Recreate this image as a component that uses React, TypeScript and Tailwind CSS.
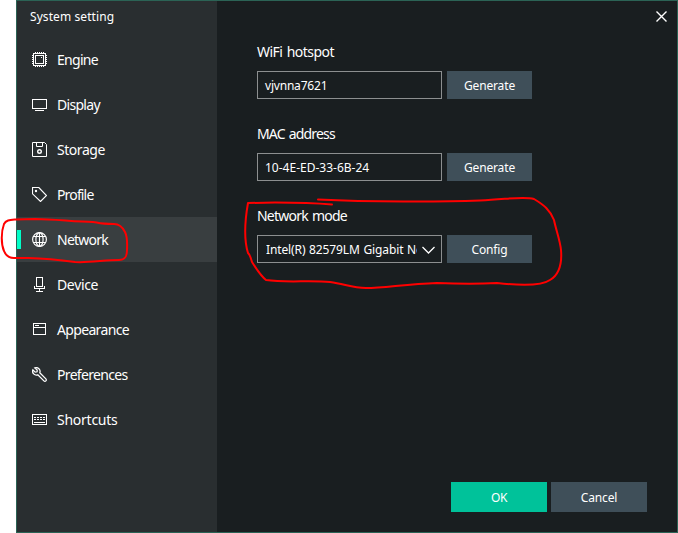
import type { ReactNode } from "react";

const icons: Record<string, ReactNode> = {
  Engine: (
    <g shapeRendering="crispEdges">
      <rect x="1.5" y="1.5" width="12" height="12" />
      <rect x="3.5" y="3.5" width="8" height="8" />
      <path d="M3 .5h9M3 14.5h9M.5 3v9M14.5 3v9" strokeDasharray="1 1" />
      <path d="M9 5.5h1" />
    </g>
  ),
  Display: (
    <g shapeRendering="crispEdges">
      <rect x=".5" y="2.5" width="14" height="9" />
      <path d="M3 13.5h9" />
    </g>
  ),
  Storage: (
    <g>
      <path d="M.5.5h12l2 2v12H.5z" />
      <path d="M4.5.5v4h6v-4" />
      <circle cx="7.5" cy="9.5" r="1.8" strokeWidth="1.4" />
    </g>
  ),
  Profile: (
    <g strokeWidth="1.15">
      <path d="M.5.5h6.3l7.7 8-6 6-8-7.7z" />
      <circle cx="4" cy="4" r=".6" />
    </g>
  ),
  Network: (
    <g strokeWidth="1.15">
      <circle cx="7.5" cy="7.5" r="6.9" />
      <ellipse cx="7.5" cy="7.5" rx="3.6" ry="6.9" />
      <path d="M7.5.5v14M1 4.500h13M1 10.500h13" />
    </g>
  ),
  Device: (
    <g shapeRendering="crispEdges">
      <rect x="4.5" y=".5" width="6" height="9" />
      <path d="M2.5 9v2.5h10V9M7.5 11v3M4 14.5h7" />
    </g>
  ),
  Appearance: (
    <g shapeRendering="crispEdges">
      <rect x="1.5" y="1.5" width="12" height="11" />
      <path d="M2 5.5h11M3 3.5h4" />
    </g>
  ),
  Preferences: (
    <g strokeWidth="1.25">
      <path d="M2.8.9a3.8 3.8 0 0 1 5 4.9l6.1 6.1a1.4 1.4 0 0 1-2 2L5.8 7.8a3.8 3.8 0 0 1-4.9-5l2.3 2.3 1.9-.3.1-1.7z" />
    </g>
  ),
  Shortcuts: (
    <g shapeRendering="crispEdges">
      <rect x=".5" y="2.5" width="14" height="10" />
      <path d="M2 5.5h11M2 7.5h11" strokeDasharray="2 1" />
      <path d="M2 10.5h11" />
    </g>
  ),
};

const menu = [
  { name: "Engine", tracking: "tracking-[-0.7px]" },
  { name: "Display", tracking: "tracking-[-0.7px]" },
  { name: "Storage", tracking: "tracking-[-0.45px]" },
  { name: "Profile", tracking: "tracking-[-0.85px]" },
  { name: "Network", tracking: "tracking-[-0.75px]" },
  { name: "Device", tracking: "tracking-[-0.35px]" },
  { name: "Appearance", tracking: "tracking-[-0.66px]" },
  { name: "Preferences", tracking: "tracking-[-0.67px]" },
  { name: "Shortcuts", tracking: "tracking-[-0.25px]" },
];

function Sidebar() {
  return (
    <aside className="flex w-[200px] shrink-0 flex-col bg-[#292e30]">
      <div className="flex h-9 items-center pb-1 pl-[13px] text-[12px] tracking-[0.08px]">
        <span>System setting</span>
      </div>
      <nav className="flex flex-col">
        {menu.map(({ name, tracking }) => {
          const active = name === "Network";
          return (
            <a key={name} className={`flex h-[45px] items-center ${active ? "bg-[#393e40]" : ""}`}>
              <span className={`h-[19px] w-1 ${active ? "bg-[#00ffc8]" : ""}`} />
              <svg className="ml-[11px] size-[15px] shrink-0" viewBox="0 0 15 15" fill="none" stroke="#fff">
                {icons[name]}
              </svg>
              <span className={`ml-[10px] text-[14px] ${tracking}`}>{name}</span>
            </a>
          );
        })}
      </nav>
    </aside>
  );
}

type FieldProps = { label: string; tracking: string; button: string; children: ReactNode };

function Field({ label, tracking, button, children }: FieldProps) {
  return (
    <section className="flex h-[82px] flex-col">
      <h2 className={`h-[29px] text-[14px] leading-5 [word-spacing:1.3px] ${tracking}`}>{label}</h2>
      <div className="flex h-7 gap-[5px] text-[12px]">
        <div className="flex w-[185px] items-center border border-[#8c8f90] pt-[2px] pl-[7px]">{children}</div>
        <button className="w-[85px] bg-[#3f4f59] pt-[2px] tracking-[-0.15px]">{button}</button>
      </div>
    </section>
  );
}

export default function App() {
  return (
    <div className="relative h-[533px] w-[678px] bg-white pl-4 font-['Noto_Sans',sans-serif] text-white">
      <div className="flex h-[533px] border border-[#2b6355] bg-[#191e20]">
        <Sidebar />
        <main className="flex grow flex-col">
          <header className="flex h-[41px] justify-end pt-[10px] pr-[10px]">
            <svg className="size-[11px]" viewBox="0 0 11 11" stroke="#fff" strokeWidth="1.4">
              <path d="M.5.5l10 10M10.5.5l-10 10" />
            </svg>
          </header>
          <div className="flex grow flex-col pl-10">
            <Field label="WiFi hotspot" tracking="tracking-[-0.54px]" button="Generate">
              <span className="tracking-[-0.2px]">vjvnna7621</span>
            </Field>
            <Field label="MAC address" tracking="tracking-[-0.84px]" button="Generate">
              <span>10-4E-ED-33-6B-24</span>
            </Field>
            <Field label="Network mode" tracking="tracking-[-0.78px]" button="Config">
              <span className="ml-px w-[151px] shrink-0 overflow-hidden tracking-[-0.12px] whitespace-nowrap [word-spacing:0.7px]">
                Intel(R) 82579LM Gigabit Network
              </span>
              <svg className="mb-px ml-[5px] h-2 w-[13px] shrink-0" viewBox="0 0 13 8" fill="none" stroke="#fff" strokeWidth="1.3">
                <path d="M.5 1l6 6 6-6" />
              </svg>
            </Field>
          </div>
          <footer className="flex justify-end gap-1 pr-[30px] pb-5 text-[12px]">
            <button className="h-[30px] w-24 bg-[#00c29a] pt-[2px] tracking-[-0.3px]">OK</button>
            <button className="h-[30px] w-24 bg-[#3f4f59] pt-[2px] tracking-[-0.15px]">Cancel</button>
          </footer>
        </main>
      </div>
      <svg
        className="pointer-events-none absolute inset-0 h-[533px] w-[678px]"
        viewBox="0 0 678 533"
        fill="none"
        stroke="#f00"
        strokeWidth="2"
        strokeLinecap="round"
        strokeLinejoin="round"
      >
        <path d="M16 219.500C10 220 6 220 4 224C1 232 1 244 4 251C6 256 9 258 14 258L28 258C45 258.500 60 260 75 262C88 263 105 260 119 260C125 260 127 257 127 250C127.500 241 127 236 125 232C122 226 118 224 114 224C98 224 97 222 93 222C75 222 55 219 35 219L16 219.500" />
        <path d="M332 204.500C315 203 290 202.500 275 202.500L248 203C245 220 244 240 248 253C250 255 251 258 252 262C257 270 261 276 266 280C285 283 310 280 330 282C345 284 352 288 366 288C385 288 405 284 437 283C460 284 480 284 497 283C515 285 540 287 550 280C560 274 562 262 561 250C560 240 556 230 554 220C550 210 544 205 534 199C524 196 510 199 480 200.500C440 202 370 202 318 199.500" />
      </svg>
    </div>
  );
}
